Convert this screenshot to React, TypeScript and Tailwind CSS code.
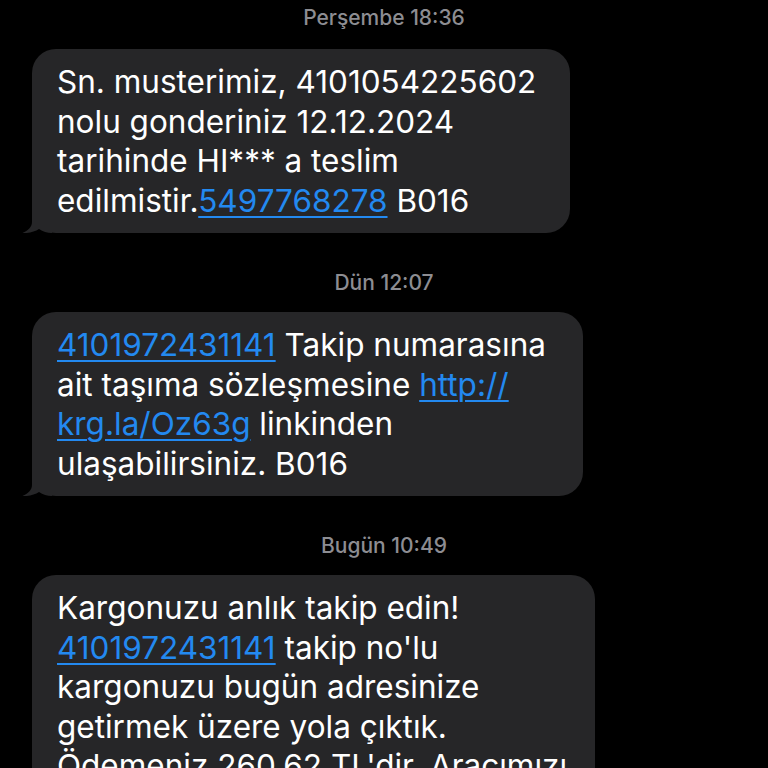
import type { ReactNode } from "react";

const Link = ({ children }: { children: ReactNode }) => (
  <span className="text-[#2389f0] underline decoration-2 underline-offset-[4px]">{children}</span>
);

const Stamp = ({ children, className = "" }: { children: ReactNode; className?: string }) => (
  <div className={`text-center text-[21px] leading-[22px] font-medium text-[#8d8d92] ${className}`}>
    {children}
  </div>
);

const Tail = () => (
  <svg
    className="absolute bottom-0 -left-[10px]"
    width="30"
    height="24"
    viewBox="0 0 30 24"
    fill="#262628"
  >
    <path d="M10 0 L10 13 C10 18 6 21.5 0.5 24 C7 24.5 13 22.5 17 20 C21 22.5 25 24 30 24 L30 0 Z" />
  </svg>
);

const Bubble = ({ width, lines }: { width: string; lines: ReactNode[] }) => (
  <div className="pl-8">
    <div className={`relative rounded-[24px] bg-[#262628] pl-[25px] py-[13px] text-white ${width}`}>
      {lines.map((line, i) => (
        <div key={i} className="whitespace-nowrap text-[31.5px] leading-[39.5px]">
          {line}
        </div>
      ))}
      <Tail />
    </div>
  </div>
);

export default function App() {
  return (
    <div
      className="h-screen overflow-hidden bg-black pt-[7px]"
      style={{ fontFamily: "Inter, 'Noto Sans', 'Liberation Sans', sans-serif" }}
    >
      <Stamp className="mb-5">Perşembe 18:36</Stamp>
      <Bubble
        width="w-[538px]"
        lines={[
          "Sn. musterimiz, 4101054225602",
          "nolu gonderiniz 12.12.2024",
          "tarihinde HI*** a teslim",
          <>
            edilmistir.<Link>5497768278</Link> B016
          </>,
        ]}
      />

      <Stamp className="mt-[39px] mb-[18px]">Dün 12:07</Stamp>
      <Bubble
        width="w-[551px]"
        lines={[
          <>
            <Link>4101972431141</Link> Takip numarasına
          </>,
          <>
            ait taşıma sözleşmesine <Link>http://</Link>
          </>,
          <>
            <Link>krg.la/Oz63g</Link> linkinden
          </>,
          "ulaşabilirsiniz. B016",
        ]}
      />

      <Stamp className="mt-[39px] mb-[18px]">Bugün 10:49</Stamp>
      <Bubble
        width="w-[563px]"
        lines={[
          "Kargonuzu anlık takip edin!",
          <>
            <Link>4101972431141</Link> takip no'lu
          </>,
          "kargonuzu bugün adresinize",
          "getirmek üzere yola çıktık.",
          "Ödemeniz 260,62 TL'dir. Aracımızı",
        ]}
      />
    </div>
  );
}
